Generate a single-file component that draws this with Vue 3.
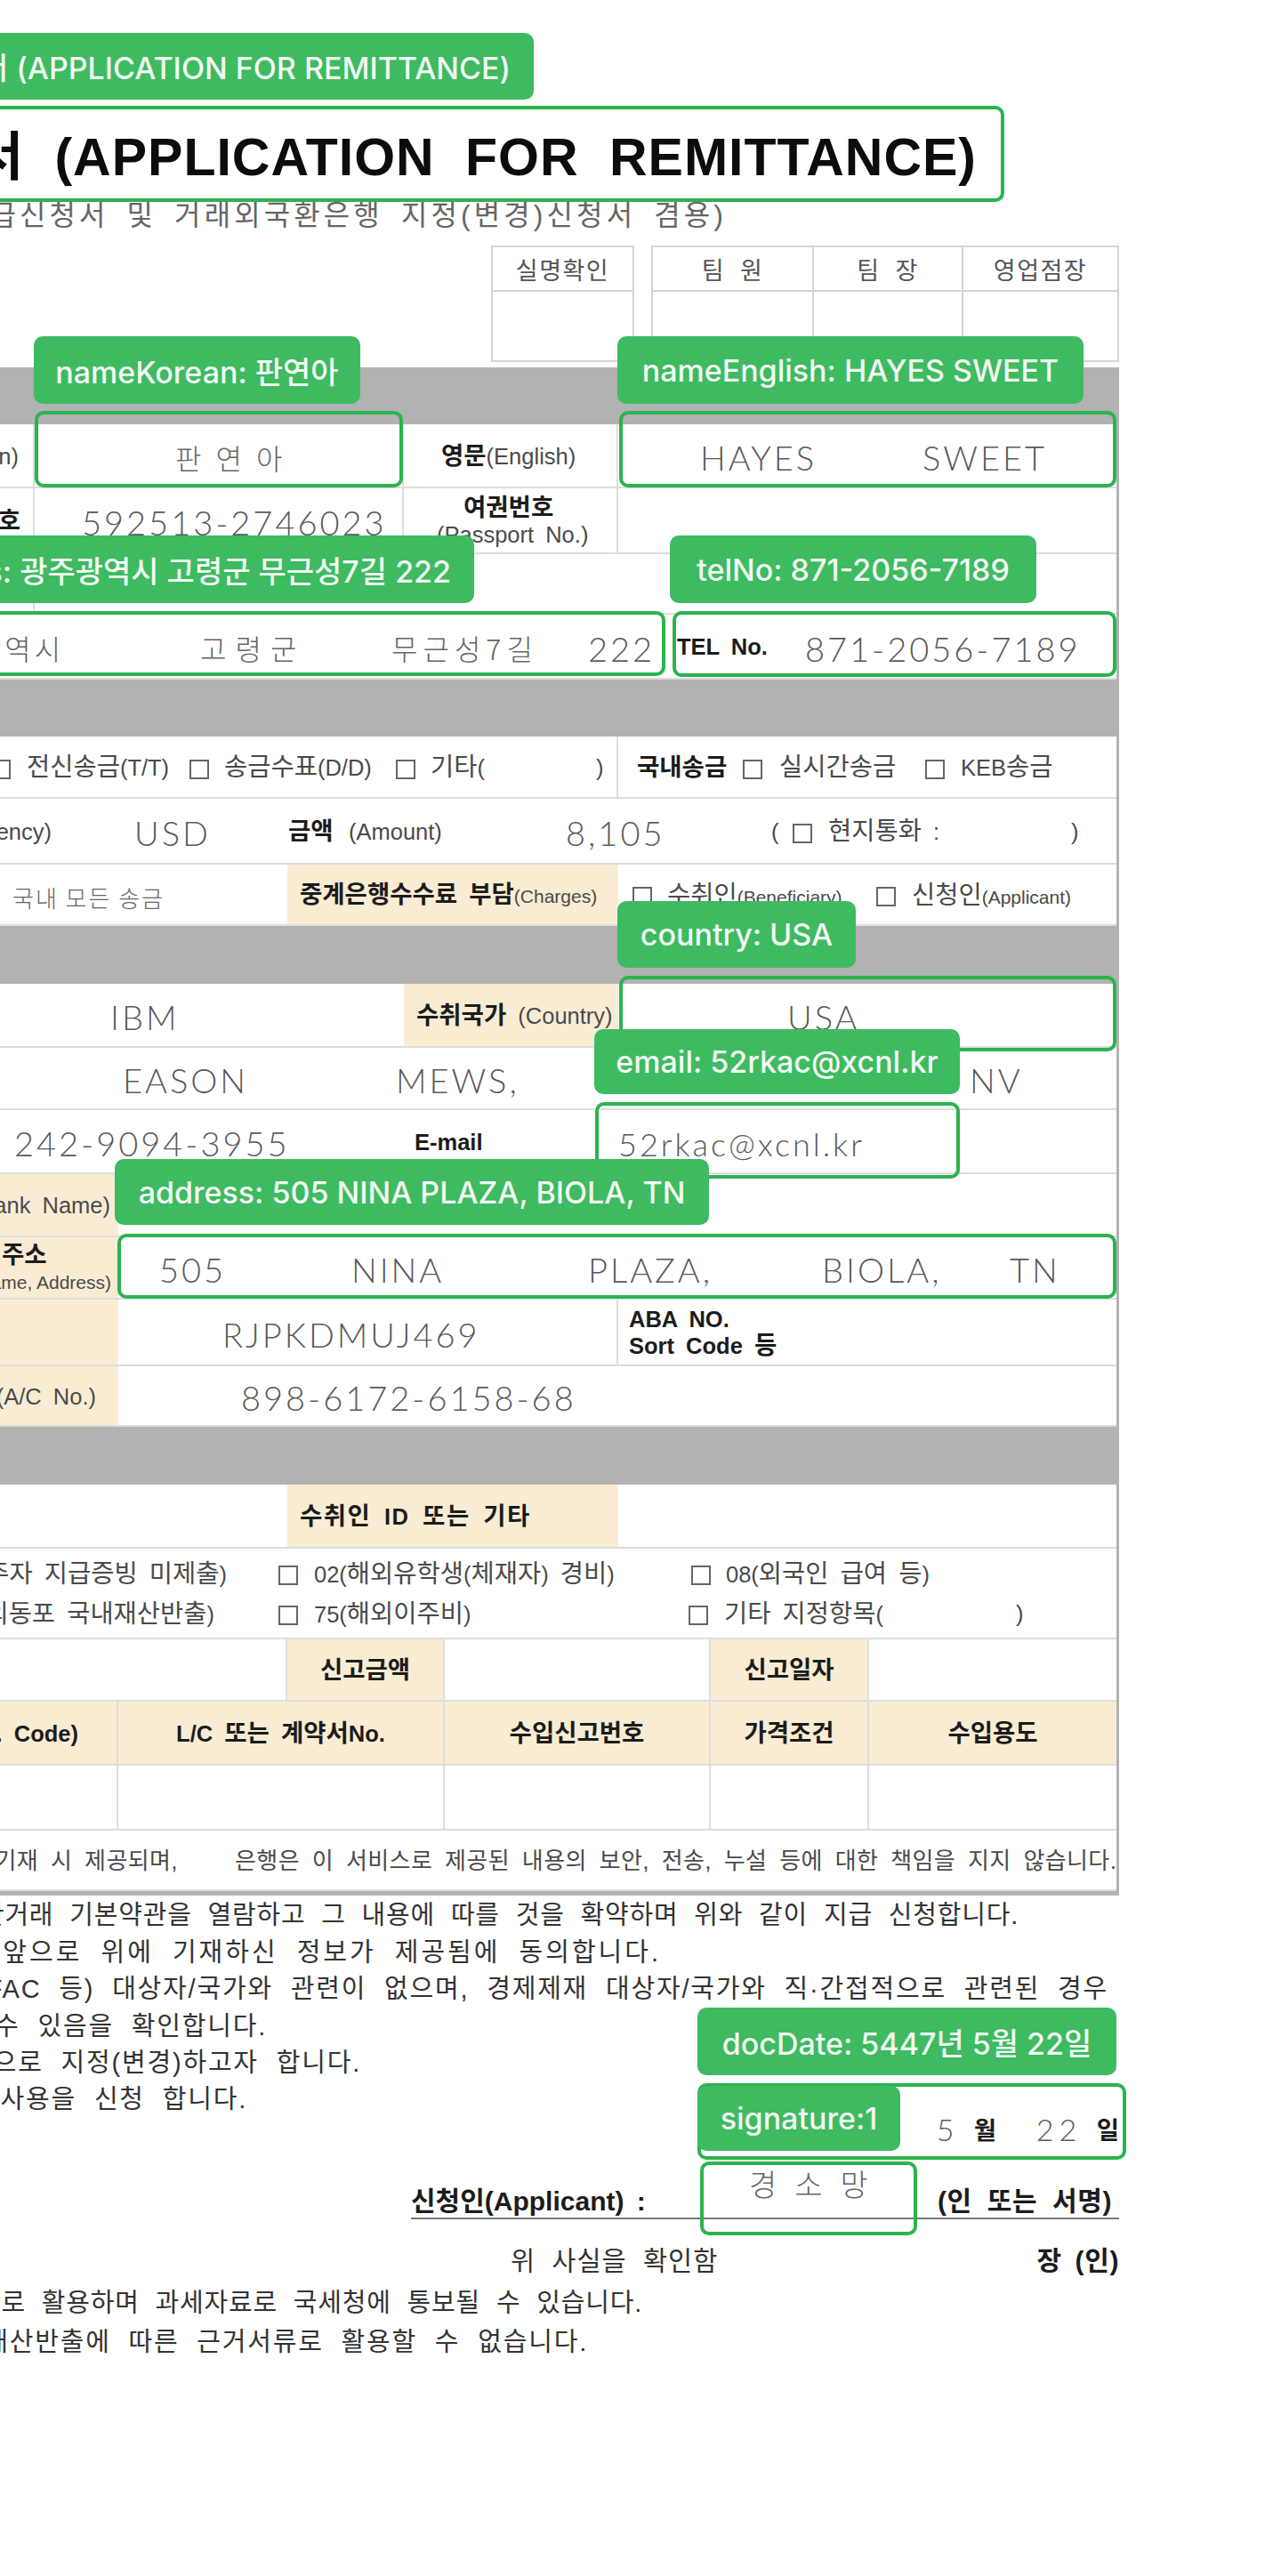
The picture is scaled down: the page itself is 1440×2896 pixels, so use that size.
<script setup>
// Column lines of the form, in page x. The document runs off the left edge of the page.
const X = { l: -200, a: 39, b: 133, c: 323, d: 454, e: 500, f: 695, g: 756, h: 799, i: 977, j: 1079, r: 1255 }

// Hangul and Latin have different sizes in the scanned form's typeface.
const split = (t, k) => {
  if (k !== 'tx' && k !== 'bd') return [{ t, k }]
  return t.match(/[가-힣]+|[^가-힣]+/g).map((s) => ({ t: s, k, lat: !/[가-힣]/.test(s) }))
}
const T = (t, x, k = 'tx', extra = {}) => ({ x, parts: split(t, k), ...extra })
const B = (t, x, extra = {}) => T(t, x, 'bd', extra)
const H = (t, x, extra = {}) => T(t, x, 'hw', extra)
const K = (t, x, extra = {}) => T(t, x, 'hk', extra)
const Box = (x) => ({ x, box: true, parts: [] })
const Mix = (x, ...parts) => ({ x, parts: parts.flatMap(([t, k]) => split(t, k)) })

const cell = (c, runs, o = {}) => ({ c, lines: [{ runs, end: o.end, center: o.center }], bg: o.bg, br: o.br })
const stack = (c, lines, o = {}) => ({ c, lines, bg: o.bg, br: o.br, tight: o.tight })
const bar = (h) => ({ h, bar: true, cells: [] })
const row = (h, ...cells) => ({ h, cells })
const beige = { bg: true }

const rows = [
  bar(64),
  row(72,
    cell('l/a', [T('한글(Korean)')], { end: 23, br: true }),
    cell('a/d', [K('판연아', 197, { ls: 16 })], { br: true }),
    cell('d/f', [Mix(496, ['영문', 'bd'], ['(English)', 'tx'])], { br: true }),
    cell('f/r', [H('HAYES', 787), H('SWEET', 1037, { ls: 8 })])),
  row(74,
    cell('l/a', [B('주민등록번호')], { end: 25, br: true }),
    cell('a/d', [H('592513-2746023', 92, { ls: 6 })], { br: true }),
    stack('d/f', [{ runs: [B('여권번호', 521)] }, { runs: [T('(Passport No.)', 491)] }], { br: true, tight: true }),
    cell('f/r', [])),
  row(68, cell('l/a', [], { br: true }), cell('a/r', [])),
  row(73,
    cell('l/g', [K('광주광역시', -95, { ls: 4 }), K('고령군', 225, { ls: 10 }), K('무근성7길', 440, { ls: 6 }), H('222', 661)]),
    cell('g/r', [B('TEL No.', 761), H('871-2056-7189', 905, { ls: 4 })])),
  bar(64),
  row(70,
    cell('l/f', [Box(-10), T('전신송금(T/T)', 30), Box(213), T('송금수표(D/D)', 252), Box(445), T('기타(', 484), T(')', 670)], { br: true }),
    cell('f/r', [B('국내송금', 716), Box(835), T('실시간송금', 876), Box(1040), T('KEB송금', 1080)])),
  row(74,
    cell('l/r', [Mix(-113, ['통화', 'bd'], ['(Currency)', 'tx']), H('USD', 151, { ls: 1 }), Mix(324, ['금액', 'bd']), T('(Amount)', 392), H('8,105', 636, { ls: 1 }), T('(', 867), Box(891), T('현지통화 :', 931), T(')', 1204)])),
  row(69,
    cell('l/c', [K('국내 모든 송금', 14, { small: true })]),
    cell('c/f', [Mix(337, ['중계은행수수료 부담', 'bd'], ['(Charges)', 'sm'])], beige),
    cell('f/r', [Box(711), Mix(750, ['수취인', 'tx'], ['(Beneficiary)', 'sm']), Box(985), Mix(1025, ['신청인', 'tx'], ['(Applicant)', 'sm'])])),
  bar(65),
  row(72,
    cell('l/d', [H('IBM', 124)]),
    cell('d/f', [Mix(468, ['수취국가', 'bd'], [' (Country)', 'tx'])], beige),
    cell('f/r', [H('USA', 885)])),
  row(70, cell('l/r', [H('EASON', 138, { ls: 2 }), H('MEWS,', 445, { ls: 7 }), H('NV', 1090)])),
  row(72,
    cell('l/d', [H('242-9094-3955', 16, { ls: 8 })]),
    cell('d/f', [B('E-mail', 466)]),
    cell('f/r', [H('52rkac@xcnl.kr', 684, { ls: 7.5, lower: true })])),
  row(71,
    cell('l/b', [T('(Bank Name)')], { end: 124, bg: true }),
    cell('b/r', [])),
  row(70,
    stack('l/b', [{ runs: [B('주소', 2)] }, { runs: [T('(Name, Address)', 0, 'sm')], end: 125 }], { bg: true, tight: true }),
    cell('b/r', [H('505', 179, { ls: 12 }), H('NINA', 395), H('PLAZA,', 661, { ls: 8 }), H('BIOLA,', 924, { ls: 5 }), H('TN', 1135, { ls: 18 })])),
  row(75,
    cell('l/b', [], beige),
    cell('b/f', [H('RJPKDMUJ469', 250, { ls: 8.5 })], { br: true }),
    stack('f/r', [{ runs: [B('ABA NO.', 707)] }, { runs: [B('Sort Code 등', 707)] }], { tight: true })),
  row(68,
    cell('l/b', [T('(A/C No.)')], { end: 108, bg: true }),
    cell('b/r', [H('898-6172-6158-68', 271, { ls: 10 })])),
  bar(65),
  row(72,
    cell('l/c', []),
    cell('c/f', [B('수취인 ID 또는 기타', 337, { ls: 1.5 })], beige),
    cell('f/r', [])),
  row(102,
    stack('l/r', [
      { runs: [T('비거주자 지급증빙 미제출)', -200, 'tx', { endAt: 255 }), Box(313), T('02(해외유학생(체재자) 경비)', 353), Box(777), T('08(외국인 급여 등)', 816)] },
      { runs: [T('재외동포 국내재산반출)', -200, 'tx', { endAt: 241 }), Box(313), T('75(해외이주비)', 353), Box(774), T('기타 지정항목(', 814), T(')', 1142)] },
    ])),
  row(70,
    cell('l/c', [], { br: true }),
    cell('c/e', [B('신고금액')], { center: true, bg: true, br: true }),
    cell('e/h', [], { br: true }),
    cell('h/i', [B('신고일자')], { center: true, bg: true, br: true }),
    cell('i/r', [])),
  row(72,
    cell('l/b', [B('(H.S. Code)')], { end: 90, bg: true, br: true }),
    cell('b/e', [B('L/C 또는 계약서No.')], { center: true, bg: true, br: true }),
    cell('e/h', [B('수입신고번호')], { center: true, bg: true, br: true }),
    cell('h/i', [B('가격조건')], { center: true, bg: true, br: true }),
    cell('i/r', [B('수입용도')], { center: true, bg: true })),
  row(73,
    cell('l/b', [], { br: true }),
    cell('b/e', [], { br: true }),
    cell('e/h', [], { br: true }),
    cell('h/i', [], { br: true }),
    cell('i/r', [])),
  row(68,
    cell('l/r', [T('정보는 기재 시 제공되며,', -200, 'nt', { endAt: 200 }), T('은행은 이 서비스로 제공된 내용의 보안, 전송, 누설 등에 대한 책임을 지지 않습니다.', 264, 'nt')])),
]

const side = (id) => id.split('/').map((n) => X[n])

function lineStyle(cellDef, line) {
  const [from, to] = side(cellDef.c)
  if (line.end !== undefined) return { paddingRight: `${to - line.end}px`, justifyContent: 'flex-end' }
  if (line.center || !line.runs.length || line.runs[0].x === undefined) return { justifyContent: 'center' }
  return { paddingLeft: `${line.runs[0].x - from}px` }
}

function runStyle(line, i) {
  const run = line.runs[i]
  const next = line.runs[i + 1]
  const s = {}
  if (run.ls) s.letterSpacing = `${run.ls}px`
  if (run.x !== undefined && next && next.x !== undefined) s.width = `${next.x - run.x}px`
  if (run.endAt !== undefined) {
    s.justifyContent = 'flex-end'
    s.paddingRight = `${next.x - run.endAt}px`
  }
  return s
}

const notes = [
  { t: '본인은 귀행의 외국환거래 기본약관을 열람하고 그 내용에 따를 것을 확약하며 위와 같이 지급 신청합니다.', end: 1145 },
  { t: '본인은 앞으로 위에 기재하신 정보가 제공됨에 동의합니다.', end: 743, cls: 'wider' },
  { t: '(OFAC 등) 대상자/국가와 관련이 없으며, 경제제재 대상자/국가와 직·간접적으로 관련된 경우', end: 1246, cls: 'wide' },
  { t: '거래가 제한될 수 있음을 확인합니다.', end: 300, cls: 'wide' },
  { t: '거래외국환은행으로 지정(변경)하고자 합니다.', end: 406, cls: 'wide' },
]
const tailNotes = [
  { t: '위 내용은 자료로 활용하며 과세자료로 국세청에 통보될 수 있습니다.', end: 722 },
  { t: '이 서류는 재산반출에 따른 근거서류로 활용할 수 없습니다.', end: 661, cls: 'wide' },
]
const endPad = (end) => ({ paddingRight: `${1440 - end}px` })

// Annotation overlay: outlined regions and their green tags, placed over the scanned form.
const regions = [
  [-20, 119, 1149, 108], [39, 462, 414, 86], [696, 462, 559, 86],
  [-20, 687, 768, 73], [756, 687, 499, 74], [696, 1097, 559, 85],
  [669, 1239, 410, 86], [132, 1387, 1123, 73], [784, 2342, 482, 86], [787, 2430, 244, 83],
]
const tags = [
  { t: 'title: 외화지급신청서 (APPLICATION FOR REMITTANCE)', b: [-20, 37, 620, 75], clip: true },
  { t: 'nameKorean: 판연아', b: [38, 378, 367, 76] },
  { t: 'nameEnglish: HAYES SWEET', b: [694, 378, 524, 76] },
  { t: 'address: 광주광역시 고령군 무근성7길 222', b: [-20, 602, 553, 76], clip: true },
  { t: 'telNo: 871-2056-7189', b: [753, 602, 412, 76] },
  { t: 'country: USA', b: [694, 1013, 268, 75] },
  { t: 'email: 52rkac@xcnl.kr', b: [668, 1157, 411, 73] },
  { t: 'address: 505 NINA PLAZA, BIOLA, TN', b: [129, 1303, 668, 74] },
  { t: 'docDate: 5447년 5월 22일', b: [784, 2257, 471, 76] },
  { t: 'signature:1', b: [784, 2345, 228, 73] },
]
const boxStyle = ([x, y, w, h]) => ({ left: `${x}px`, top: `${y}px`, width: `${w}px`, height: `${h}px` })
</script>

<template>
  <div class="page">
    <div class="doc">
      <header class="head">
        <h1 class="title">외화지급신청서 (APPLICATION FOR REMITTANCE)</h1>
        <p class="subtitle">(외화지급신청서 및 거래외국환은행 지정(변경)신청서 겸용)</p>
        <div class="approvals">
          <div class="approval one">
            <div class="ap-col"><span class="ap-h">실명확인</span><span class="ap-b"></span></div>
          </div>
          <div class="approval three">
            <div class="ap-col c1"><span class="ap-h">팀 원</span><span class="ap-b"></span></div>
            <div class="ap-col c2"><span class="ap-h">팀 장</span><span class="ap-b"></span></div>
            <div class="ap-col c3"><span class="ap-h">영업점장</span><span class="ap-b"></span></div>
          </div>
        </div>
      </header>

      <section class="form">
        <div v-for="(r, ri) in rows" :key="ri" class="row" :class="{ bar: r.bar }" :style="{ height: r.h + 'px' }">
          <div
            v-for="(c, ci) in r.cells"
            :key="ci"
            class="cell"
            :class="{ beige: c.bg, br: c.br, tight: c.tight }"
            :style="{ gridColumn: c.c.replace('/', ' / ') }"
          >
            <div v-for="(l, li) in c.lines" :key="li" class="line" :style="lineStyle(c, l)">
              <span
                v-for="(run, i) in l.runs"
                :key="i"
                class="run"
                :class="{ lower: run.lower, small: run.small }"
                :style="runStyle(l, i)"
              >
                <span v-if="run.box" class="box"></span>
                <span v-else class="rt"><span v-for="(p, pi) in run.parts" :key="pi" :class="[p.k, { lat: p.lat }]">{{ p.t }}</span></span>
              </span>
            </div>
          </div>
        </div>
      </section>
    </div>

    <section class="notes">
      <p v-for="(n, i) in notes" :key="i" class="note" :class="n.cls" :style="endPad(n.end)">{{ n.t }}</p>
      <div class="note-date">
        <p class="note last wide">서비스 사용을 신청 합니다.</p>
        <div class="date">
          <span class="dw date-m">5</span><span class="bd date-wm">월</span>
          <span class="dw date-d">22</span><span class="bd">일</span>
        </div>
      </div>
      <div class="applicant">
        <span class="bd ap-label">신청인(Applicant) :</span>
        <span class="ap-sign">경소망</span>
        <span class="bd ap-seal">(인 또는 서명)</span>
      </div>
      <div class="confirm">
        <span class="tx-note">위 사실을 확인함</span>
        <span class="bd seal">장 (인)</span>
      </div>
      <div class="tail">
        <p v-for="(n, i) in tailNotes" :key="i" class="note tail-note" :class="n.cls" :style="endPad(n.end)">{{ n.t }}</p>
      </div>
    </section>

    <div v-for="(b, i) in regions" :key="'r' + i" class="region" :style="boxStyle(b)"></div>
    <div v-for="(g, i) in tags" :key="'t' + i" class="tag" :class="{ clip: g.clip }" :style="boxStyle(g.b)">
      <span class="tag-text">{{ g.t }}</span>
    </div>
  </div>
</template>

<style>
html, body { margin: 0; background: #fff; }
</style>

<style scoped>
.page {
  position: relative;
  width: 1440px;
  height: 2896px;
  overflow: hidden;
  background: #fff;
  color: #444;
  font-family: "Liberation Sans", "Noto Sans CJK KR", sans-serif;
}
.doc { margin-left: -200px; width: 1458px; }

.head { display: flex; flex-direction: column; height: 413px; padding-top: 137px; box-sizing: border-box; }
.title {
  margin: 0;
  display: flex;
  justify-content: flex-end;
  padding-right: 160px;
  white-space: nowrap;
  font-size: 59px;
  line-height: 80px;
  font-weight: 700;
  letter-spacing: 1px;
  word-spacing: 17px;
  color: #0c0c0c;
}
.subtitle {
  margin: 5px 0 0;
  display: flex;
  justify-content: flex-end;
  padding-right: 441px;
  white-space: nowrap;
  font-size: 32px;
  line-height: 40px;
  letter-spacing: 4.1px;
  word-spacing: 7px;
  color: #666;
}
.approvals { display: flex; margin: 14px 0 0 752px; }
.approval { display: flex; border: 2px solid #d4d4d4; height: 131px; box-sizing: border-box; }
.approval.one { width: 161px; }
.approval.three { width: 526px; margin-left: 19px; }
.ap-col { display: flex; flex-direction: column; flex: 1; }
.c1 { flex: 0 0 181px; border-right: 2px solid #d4d4d4; box-sizing: border-box; }
.c2 { flex: 0 0 168px; border-right: 2px solid #d4d4d4; box-sizing: border-box; }
.ap-h {
  height: 48px;
  display: flex;
  align-items: center;
  justify-content: center;
  border-bottom: 2px solid #d4d4d4;
  font-size: 27px;
  letter-spacing: 1.5px;
  word-spacing: 8px;
  color: #555;
}
.ap-b { flex: 1; }

.form {
  width: 1458px;
  border-right: 3px solid #b2b2b2;
  border-bottom: 5px solid #b2b2b2;
  box-sizing: border-box;
}
.row {
  display: grid;
  grid-template-columns:
    [l] 239px [a] 94px [b] 190px [c] 131px [d] 46px [e] 195px [f] 61px [g] 43px [h] 178px [i] 102px [j] 176px [r];
  border-bottom: 2px solid #dddddd;
  box-sizing: border-box;
}
.row.bar { background: #b2b2b2; border-bottom: 0; }
.cell {
  display: flex;
  flex-direction: column;
  justify-content: center;
  min-width: 0;
  padding-top: 5px;
  box-sizing: border-box;
}
.cell.beige { background: #f9ecd3; }
.cell.br { border-right: 2px solid #dddddd; }
.line { display: flex; align-items: center; white-space: nowrap; box-sizing: border-box; line-height: 40px; }
.cell.tight .line { line-height: 30px; height: 30px; }
.run { display: flex; flex: none; align-items: center; box-sizing: border-box; }
.rt { display: inline; }

.tx { font-size: 28.5px; word-spacing: 6px; color: #4a4a4a; }
.bd { font-size: 27.5px; font-weight: 700; word-spacing: 6px; color: #1c1c1c; }
.lat { font-size: 25.5px; }
.sm { font-size: 21px; color: #4a4a4a; }
.nt { font-size: 26px; color: #4a4a4a; letter-spacing: 0.4px; word-spacing: 6.2px; }
.hw, .dw {
  font-family: "Lato", "Liberation Sans", "Noto Sans CJK KR", sans-serif;
  font-weight: 300;
  font-size: 38px;
  color: #5a5a5a;
  letter-spacing: 3px;
}
.hw { display: inline-block; padding-top: 9px; }
.hk, .ap-sign {
  font-family: "Noto Sans CJK KR", sans-serif;
  font-weight: 300;
  font-size: 32px;
  color: #666;
}
.hk { display: inline-block; padding-top: 7px; }
.small .hk { font-size: 26px; letter-spacing: 2px; }
.lower .hw { font-size: 36px; }
.box {
  display: block;
  width: 22px;
  height: 22px;
  border: 2px solid #666;
  box-sizing: border-box;
}

.notes { display: flex; flex-direction: column; padding-top: 2px; }
.note {
  margin: 0;
  height: 41.5px;
  line-height: 41.5px;
  display: flex;
  justify-content: flex-end;
  white-space: nowrap;
  font-size: 29px;
  letter-spacing: 0.8px;
  word-spacing: 9px;
  color: #333;
}
.note.wide { letter-spacing: 1.8px; word-spacing: 10px; }
.note.wider { letter-spacing: 3px; word-spacing: 10px; }
.note-date { display: flex; justify-content: space-between; height: 74px; margin-top: -0.5px; }
.note.last { width: 278px; }
.date {
  display: flex;
  align-items: center;
  align-self: flex-end;
  height: 42px;
  margin-right: 182px;
}
.date-m { width: 42px; font-size: 34px; }
.date-wm { width: 70px; }
.date-d { width: 68px; font-size: 34px; letter-spacing: 6px; }
.applicant {
  display: flex;
  align-items: center;
  margin: 37px 0 0 462px;
  width: 796px;
  height: 42px;
  border-bottom: 2px solid #777;
  white-space: nowrap;
}
.ap-label { width: 380px; font-size: 30px; word-spacing: 6px; }
.ap-sign { width: 212px; font-size: 34px; letter-spacing: 20px; transform: translateY(-18px); }
.ap-seal { font-size: 30px; letter-spacing: 0.6px; word-spacing: 8px; }
.confirm {
  display: flex;
  align-items: center;
  justify-content: space-between;
  margin: 23px 0 0 574px;
  width: 684px;
  height: 42px;
  white-space: nowrap;
}
.tx-note { font-size: 29.5px; letter-spacing: 1px; word-spacing: 9px; color: #333; }
.seal { font-size: 30px; letter-spacing: 0.6px; word-spacing: 6px; }
.tail { margin-top: 7px; }
.tail-note { height: 44px; line-height: 44px; }

.region {
  position: absolute;
  box-sizing: border-box;
  border: 4px solid #2bb34f;
  border-radius: 10px;
}
.tag {
  position: absolute;
  display: flex;
  align-items: center;
  justify-content: center;
  box-sizing: border-box;
  overflow: hidden;
  background: #3eba60;
  border-radius: 10px;
  white-space: nowrap;
}
.tag.clip { justify-content: flex-end; padding-right: 26px; }
.tag-text {
  font-family: "Inter", "Noto Sans CJK KR", sans-serif;
  font-size: 34px;
  font-weight: 500;
  color: #f2fbf4;
  flex: none;
}
</style>
